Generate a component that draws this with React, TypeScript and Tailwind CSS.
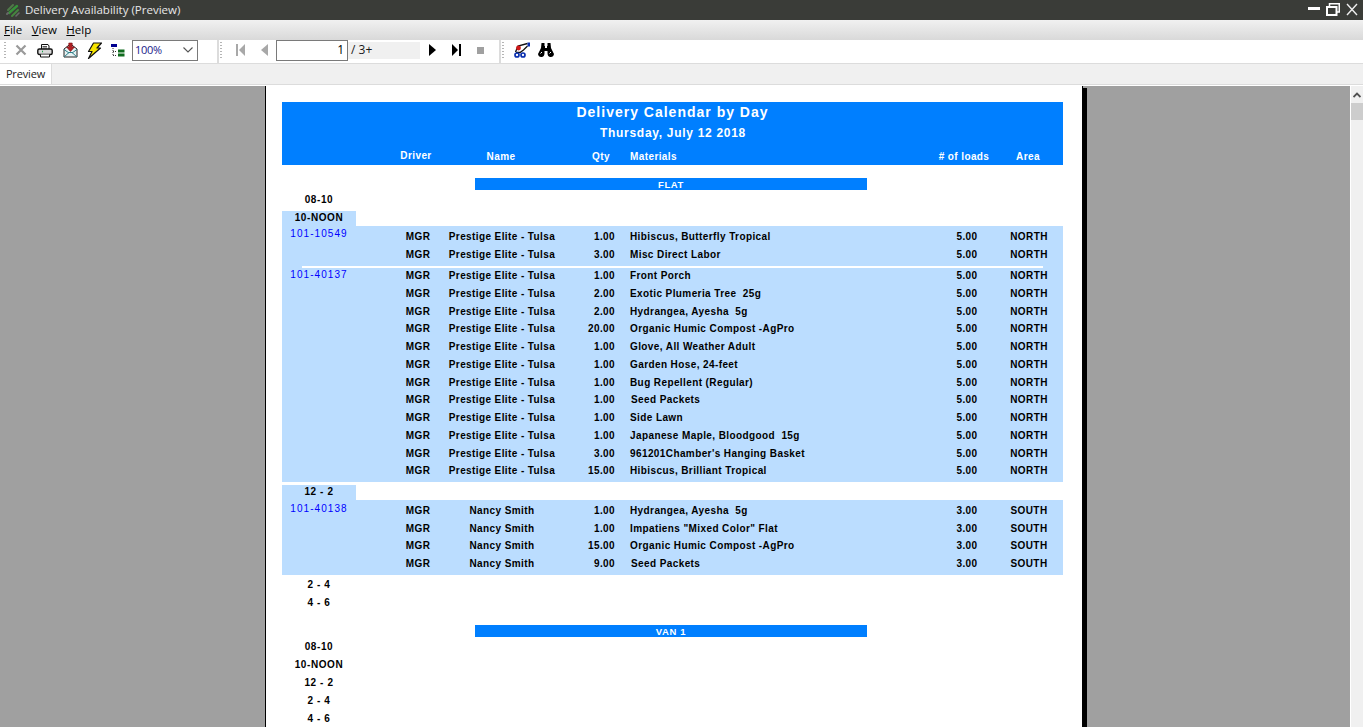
import React from "react";

const P = "Prestige Elite - Tulsa";
const N = "Nancy Smith";

const o1 = [
  ["1.00", "Hibiscus, Butterfly Tropical", 18],
  ["3.00", "Misc Direct Labor", 18],
] as [string, string, number][];
const o2 = [
  ["1.00", "Front Porch", 18],
  ["2.00", "Exotic Plumeria Tree  25g", 18],
  ["2.00", "Hydrangea, Ayesha  5g", 18],
  ["20.00", "Organic Humic Compost -AgPro", 17],
  ["1.00", "Glove, All Weather Adult", 18],
  ["1.00", "Garden Hose, 24-feet", 18],
  ["1.00", "Bug Repellent (Regular)", 18],
  ["1.00", "Seed Packets", 17],
  ["1.00", "Side Lawn", 18],
  ["1.00", "Japanese Maple, Bloodgood  15g", 18],
  ["3.00", "961201Chamber's Hanging Basket", 18],
  ["15.00", "Hibiscus, Brilliant Tropical", 17],
] as [string, string, number][];
const o3 = [
  ["1.00", "Hydrangea, Ayesha  5g", 18],
  ["1.00", 'Impatiens "Mixed Color" Flat', 18],
  ["15.00", "Organic Humic Compost -AgPro", 17],
  ["9.00", "Seed Packets", 18],
] as [string, string, number][];

function Row({ id, idTop, name, qty, mat, loads, area, h }: { id?: string; idTop?: string; name: string; qty: string; mat: string; loads: string; area: string; h: number }) {
  return (
    <div className="relative flex items-center text-black tracking-[0.4px]" style={{ height: h }}>
      <div className="w-[74px] h-full" />
      {id && (
        <span className={`absolute left-0 w-[74px] text-center font-normal tracking-[1.05px] text-[#0000ff] ${idTop}`}>{id}</span>
      )}
      <div className="w-[34px]" />
      <div className="w-[56px] text-center">MGR</div>
      <div className="w-[112px] text-center whitespace-pre">{name}</div>
      <div className="w-[18px]" />
      <div className="w-[50px] pr-[11px] text-right">{qty}</div>
      <div className="w-[4px]" />
      <div className={`w-[310px] whitespace-pre ${mat === "Seed Packets" ? "pl-[1px]" : ""}`}>{mat}</div>
      <div className="w-[54px] text-center">{loads}</div>
      <div className="w-[6px]" />
      <div className="w-[58px] text-center">{area}</div>
    </div>
  );
}

function Slot({ t }: { t: string }) {
  return <div className="w-[74px] h-[18px] flex items-center justify-center">{t}</div>;
}

function FillSlot({ t }: { t: string }) {
  return <div className="w-[74px] h-[15px] pb-[2px] bg-[#bbddff] flex items-center justify-center">{t}</div>;
}

function Band({ t }: { t: string }) {
  return (
    <div className="ml-[193px] w-[392px] h-[12px] bg-[#007fff] text-white text-center leading-[13px] text-[9.5px]">{t}</div>
  );
}

function Grip() {
  return (
    <div className="flex flex-col gap-[2px] w-[2px] mr-[3px]">
      {Array.from({ length: 6 }).map((_, i) => (
        <div key={i} className="w-[2px] h-[1px] bg-[#b5b5b5]" />
      ))}
    </div>
  );
}

function Logo() {
  return (
    <svg width="14" height="15" viewBox="0 0 14 15" className="shrink-0">
      <g strokeLinecap="round">
        <path d="M2 7 L7 2" stroke="#4f7a48" strokeWidth="2" />
        <path d="M3 10 L11 3" stroke="#37923a" strokeWidth="2.4" />
        <path d="M6 13 L12 7" stroke="#45853f" strokeWidth="2" />
        <path d="M1 11 L2 10" stroke="#686868" strokeWidth="2" />
        <path d="M10 13 L13 10" stroke="#686868" strokeWidth="1.6" />
      </g>
    </svg>
  );
}

export default function App() {
  return (
    <div className="w-[1363px] h-[727px] overflow-hidden flex flex-col font-['Liberation_Sans',sans-serif] bg-[#f0f0f0]">
      {/* Title bar */}
      <div className="h-[20px] shrink-0 bg-[#3a3c38] flex items-center">
        <div className="ml-[6px] mr-[5px]"><Logo /></div>
        <span className="text-[11.5px] text-[#e8e8e8] font-['Open_Sans',sans-serif] leading-none">Delivery Availability (Preview)</span>
        <div className="ml-auto flex items-center mr-[5px] gap-[6px]">
          <div className="w-[12px] h-[3px] bg-white mb-[3px]" />
          <svg width="14" height="13" viewBox="0 0 14 13" fill="none" stroke="#fff" className="mb-[1px]">
            <path d="M3.5 3 V0.75 H13.25 V9 H11" strokeWidth="1.5" />
            <rect x="1" y="4" width="9.5" height="8" strokeWidth="2" />
          </svg>
          <svg width="12" height="13" viewBox="0 0 12 13" stroke="#eee" strokeWidth="1.4" className="mb-[1px]">
            <path d="M1 1 L11 12 M11 1 L1 12" />
          </svg>
        </div>
      </div>

      {/* Menu */}
      <div className="h-[20px] shrink-0 bg-gradient-to-b from-[#f1f1f1] to-[#d9d9d9] flex items-center text-[11.5px] text-black font-['Open_Sans',sans-serif] pl-[4px] gap-[9.5px] leading-none">
        <span><u>F</u>ile</span>
        <span><u>V</u>iew</span>
        <span><u>H</u>elp</span>
      </div>

      {/* Toolbar */}
      <div className="h-[24px] shrink-0 bg-white border-b border-[#dcdcdc] flex items-center pb-[3px]">
        <div className="ml-[4px]"><Grip /></div>
        <svg width="12" height="12" viewBox="0 0 12 12" className="ml-[6px]" stroke="#9a9a9a" strokeWidth="2.2"><path d="M1.5 1.5 L10.5 10.5 M10.5 1.5 L1.5 10.5" /></svg>
        <svg width="16" height="15" viewBox="0 0 16 15" className="ml-[10px]" fill="none" stroke="#111">
          <path d="M4.5 6 V1.5 H11 L12 3 V6" fill="#fff" />
          <path d="M5.5 3.5 H10 M5.5 5 H10" stroke="#555" />
          <rect x="0.8" y="6" width="14.4" height="5.5" rx="1.5" fill="#d8d8d8" strokeWidth="1.4" />
          <path d="M3.5 11.5 V14 H12.5 V11.5" fill="#fff" />
          <path d="M5 8.5 H6" stroke="#17a34a" strokeWidth="1.6" />
        </svg>
        <svg width="15" height="16" viewBox="0 0 15 16" className="ml-[10px]" fill="none" stroke="#222">
          <path d="M1 7 L7.5 2 L14 7 V15 H1 Z" fill="#e6f2f3" />
          <path d="M1 15 L6 10.5 H9 L14 15 M1 7.5 L6 11 M14 7.5 L9 11" stroke="#2f7f8a" />
          <path d="M5.8 1 H9.2 V5 H11.5 L7.5 9.5 L3.5 5 H5.8 Z" fill="#b02024" stroke="#7a1015" strokeWidth="0.6" />
        </svg>
        <svg width="15" height="17" viewBox="0 0 15 17" className="ml-[9px]">
          <path d="M6.5 1 H14.5 L10 6 H13.5 L1.5 16.5 L5 9.5 H1.5 Z" fill="#f8e600" stroke="#111" strokeWidth="1.2" strokeLinejoin="round" />
        </svg>
        <svg width="15" height="14" viewBox="0 0 15 14" className="ml-[8px]">
          <rect x="1" y="1" width="6" height="3" fill="#000090" />
          <path d="M3 5 V13 M3 8.5 H7 M3 12.5 H7" stroke="#333" strokeDasharray="1 1" fill="none" />
          <rect x="8" y="6.5" width="6.5" height="3" fill="#0f6b1d" />
          <rect x="8" y="10.5" width="6.5" height="3" fill="#0f6b1d" />
        </svg>
        <div className="ml-[7px] w-[66px] h-[21px] border border-[#7a7a7a] bg-white flex items-center justify-between pl-[2px] pr-[4px] text-[11px] tracking-[-0.3px] text-[#1a1a8a] font-['Open_Sans',sans-serif]">
          <span>100%</span>
          <svg width="10" height="6" viewBox="0 0 10 6" fill="none" stroke="#555" strokeWidth="1.1"><path d="M0.5 0.5 L5 5 L9.5 0.5" /></svg>
        </div>
        <div className="ml-[19px] self-stretch -mb-[3px] w-[2px] bg-[#dcdcdc]" />
        <div className="ml-[1px]"><Grip /></div>
        <svg width="9" height="12" viewBox="0 0 9 12" className="ml-[11px]" fill="#a8a8a8"><rect x="0" y="0" width="2" height="12" /><path d="M9 0 V12 L3 6 Z" /></svg>
        <svg width="8" height="12" viewBox="0 0 8 12" className="ml-[16px]" fill="#a8a8a8"><path d="M7 0 V12 L0 6 Z" /></svg>
        <div className="ml-[7px] w-[72px] h-[21px] border border-[#7a7a7a] bg-white flex items-center justify-end pr-[3px] text-[12px] text-black font-['Open_Sans',sans-serif]">1</div>
        <div className="w-[72px] h-[17px] bg-[#f0f0f0] flex items-center pl-[3px] text-[12px] text-[#1a1a1a] font-['Open_Sans',sans-serif]">/ 3+</div>
        <svg width="7" height="12" viewBox="0 0 7 12" className="ml-[9px]" fill="#000"><path d="M0 0 V12 L7 6 Z" /></svg>
        <svg width="9" height="12" viewBox="0 0 9 12" className="ml-[16px]" fill="#000"><path d="M0 0 V12 L6 6 Z" /><rect x="7" y="0" width="2" height="12" /></svg>
        <div className="ml-[16px] w-[7px] h-[7px] bg-[#a0a0a0]" />
        <div className="ml-[15px] self-stretch -mb-[3px] w-[2px] bg-[#dcdcdc]" />
        <div className="ml-[1px]"><Grip /></div>
        <svg width="16" height="16" viewBox="0 0 16 16" className="ml-[7px]" fill="none">
          <path d="M1.5 10 L4 4 L13.5 1.5 M13.5 4 L9.5 8 L6 10.5 H2" stroke="#111" strokeWidth="1.3" />
          <circle cx="4.5" cy="6" r="2.4" fill="#d01818" />
          <circle cx="3" cy="13" r="2" stroke="#0a2fb0" strokeWidth="1.7" />
          <circle cx="9" cy="13" r="2" stroke="#0a2fb0" strokeWidth="1.7" />
          <rect x="13.5" y="0.5" width="2.5" height="4" fill="#0a2fb0" />
        </svg>
        <svg width="16" height="16" viewBox="0 0 16 16" className="ml-[8px]" fill="#000">
          <path d="M3.5 1 H6.5 V4 H7 V6 H9 V4 H9.5 V1 H12.5 L13 6 L16 12 Q15.5 15.5 12 15 Q9.5 14.5 9.5 11 V9 H6.5 V11 Q6.5 14.5 4 15 Q0.5 15.5 0 12 L3 6 Z" />
          <path d="M2.5 11.5 L4 10 M11.5 11.5 L13 10" stroke="#fff" />
        </svg>
      </div>

      {/* Tab strip */}
      <div className="h-[21px] shrink-0 bg-[#f0f0f0] border-b border-[#dcdcdc] flex items-start">
        <div className="h-[20px] w-[52px] bg-white border-r border-[#dcdcdc] flex items-center justify-center text-[11px] tracking-[-0.15px] text-[#222] font-['Open_Sans',sans-serif]">Preview</div>
      </div>

      {/* Preview area */}
      <div className="flex-1 min-h-0 flex bg-[#a0a0a0] border-t border-white">
        <div className="flex-1 min-w-0 overflow-hidden">
          <div className="ml-[265px] flex w-fit">
            <div className="w-[817px] border-l border-black bg-white shrink-0 pt-[16px] pl-[16px] pr-[19px] text-[10px] font-bold tracking-[0.6px] text-black">
              {/* Header */}
              <div className="h-[63px] bg-[#007fff] text-white flex flex-col">
                <div className="text-center text-[14px] tracking-[1px] leading-[16px] mt-[2px]">Delivery Calendar by Day</div>
                <div className="text-center text-[12px] tracking-[0.7px] leading-[14px] mt-[6px] pl-[1px]">Thursday, July 12 2018</div>
                <div className="flex mt-[11px] leading-[12px] text-[10px] tracking-[0.4px]">
                  <div className="w-[108px]" />
                  <div className="w-[52px] text-center relative top-[-1px]">Driver</div>
                  <div className="w-[118px] text-center">Name</div>
                  <div className="w-[16px]" />
                  <div className="w-[50px] text-center">Qty</div>
                  <div className="w-[4px]" />
                  <div className="w-[308px]">Materials</div>
                  <div className="w-[52px] text-center"># of loads</div>
                  <div className="w-[8px]" />
                  <div className="w-[60px] text-center">Area</div>
                </div>
              </div>

              <div className="h-[13px]" />
              <Band t="FLAT" />
              <Slot t="08-10" />
              <div className="h-[3px]" />
              <FillSlot t="10-NOON" />
              <div className="bg-[#bbddff] pt-[1px]">
                {o1.map((o, i) => (
                  <Row key={i} id={i === 0 ? "101-10549" : undefined} idTop="top-[-1px]" name={P} qty={o[0]} mat={o[1]} loads="5.00" area="NORTH" h={o[2]} />
                ))}
                <div className="h-[3px]" />
                <div className="h-[2px] -mb-[2px] ml-[20px] mr-[20px] bg-white relative" />
                {o2.map((o, i) => (
                  <Row key={i} id={i === 0 ? "101-40137" : undefined} idTop="top-[1px]" name={P} qty={o[0]} mat={o[1]} loads="5.00" area="NORTH" h={o[2]} />
                ))}
                <div className="h-[3px]" />
              </div>
              <div className="h-[3px]" />
              <FillSlot t="12 - 2" />
              <div className="bg-[#bbddff] pt-[1px] pb-[3px]">
                {o3.map((o, i) => (
                  <Row key={i} id={i === 0 ? "101-40138" : undefined} idTop="top-[0px]" name={N} qty={o[0]} mat={o[1]} loads="3.00" area="SOUTH" h={o[2]} />
                ))}
              </div>
              <Slot t="2 - 4" />
              <Slot t="4 - 6" />
              <div className="h-[14px]" />
              <Band t="VAN 1" />
              <Slot t="08-10" />
              <Slot t="10-NOON" />
              <Slot t="12 - 2" />
              <Slot t="2 - 4" />
              <Slot t="4 - 6" />
            </div>
            <div className="w-[1px] bg-black shrink-0" />
            <div className="w-[4px] mt-[2px] bg-black shrink-0" />
          </div>
        </div>

        {/* Scrollbar */}
        <div className="w-[13px] shrink-0 bg-[#f0f0f0] border-l border-white flex flex-col">
          <div className="h-[17px] flex items-center justify-center">
            <svg width="8" height="6" viewBox="0 0 8 6" fill="none" stroke="#505050" strokeWidth="1.8"><path d="M0.5 5 L4 1.5 L7.5 5" /></svg>
          </div>
          <div className="h-[17px] bg-[#cdcdcd]" />
        </div>
      </div>
    </div>
  );
}
